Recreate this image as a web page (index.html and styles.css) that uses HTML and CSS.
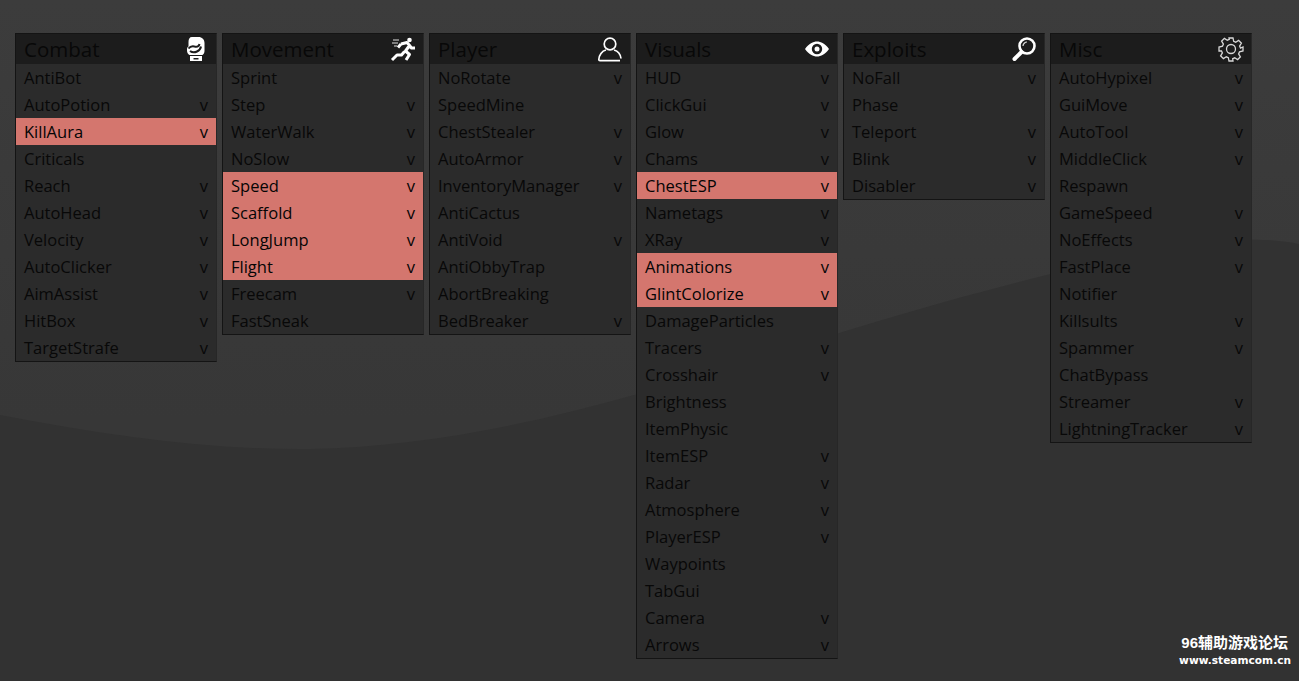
FILE: index.html
```html
<!DOCTYPE html>
<html lang="en">
<head>
<meta charset="utf-8">
<title>ClickGui</title>
<link rel="stylesheet" href="styles.css">
</head>
<body>
<svg class="wave" viewBox="0 0 1299 681" preserveAspectRatio="none" aria-hidden="true">
<path class="wave-fill" d="M0 415 C110 436 210 450 310 449 C480 446 640 395 800 345 C950 298 1130 248 1240 240 C1265 239 1285 241 1299 244 L1299 681 L0 681 Z"/>
</svg>
<main class="panels">
<section class="panel">
<header class="head"><span>Combat</span>
<svg class="icon" viewBox="0 0 24 24"><path class="solid" d="M8 0h6.500c3.500 0 6 2.500 6 6v8c0 2-1 3-2 4h-13C4 17 3 15.500 3 13.500V12c0-1 .5-2 1.500-2.500V5C4.500 2 5.500 0 8 0z"/><path class="cut" d="M4.500 11.500c2-2.500 4-2.500 6-2 2.500.5 4.500 0 5-2.500M6 14c2 1.500 5 1.500 7 .5 2-1 3.500-2 4-5"/><path class="solid" fill-rule="evenodd" d="M6 19h12v5H6zM9.500 21v1.500h5V21z"/></svg></header>
<div class="row"><span>AntiBot</span></div>
<div class="row"><span>AutoPotion</span><i>v</i></div>
<div class="row on"><span>KillAura</span><i>v</i></div>
<div class="row"><span>Criticals</span></div>
<div class="row"><span>Reach</span><i>v</i></div>
<div class="row"><span>AutoHead</span><i>v</i></div>
<div class="row"><span>Velocity</span><i>v</i></div>
<div class="row"><span>AutoClicker</span><i>v</i></div>
<div class="row"><span>AimAssist</span><i>v</i></div>
<div class="row"><span>HitBox</span><i>v</i></div>
<div class="row"><span>TargetStrafe</span><i>v</i></div>
</section>
<section class="panel">
<header class="head"><span>Movement</span>
<svg class="icon" viewBox="0 0 24 24"><circle class="solid" cx="18.500" cy="3" r="2.300"/><path class="line" d="M10 7l6-1.500 2.500 3-4 5.500 4 3.500-3.500 5.500M13.500 14.500l-3 3.500H6L1 23M10 7L7 10.500M18.500 8.500l2 2.500h3.500"/><path class="thin" d="M2 3h6M1 6h6M3 9h3"/></svg></header>
<div class="row"><span>Sprint</span></div>
<div class="row"><span>Step</span><i>v</i></div>
<div class="row"><span>WaterWalk</span><i>v</i></div>
<div class="row"><span>NoSlow</span><i>v</i></div>
<div class="row on"><span>Speed</span><i>v</i></div>
<div class="row on"><span>Scaffold</span><i>v</i></div>
<div class="row on"><span>LongJump</span><i>v</i></div>
<div class="row on"><span>Flight</span><i>v</i></div>
<div class="row"><span>Freecam</span><i>v</i></div>
<div class="row"><span>FastSneak</span></div>
</section>
<section class="panel">
<header class="head"><span>Player</span>
<svg class="icon" viewBox="0 0 24 24"><circle class="outline" cx="12" cy="7" r="5.800"/><path class="outline" d="M8 13C4 14 1 18 .8 22.500c0 .8.5 1.200 1.200 1.200h20M16 13c3.500 1 6.500 4.500 7 8.500"/></svg></header>
<div class="row"><span>NoRotate</span><i>v</i></div>
<div class="row"><span>SpeedMine</span></div>
<div class="row"><span>ChestStealer</span><i>v</i></div>
<div class="row"><span>AutoArmor</span><i>v</i></div>
<div class="row"><span>InventoryManager</span><i>v</i></div>
<div class="row"><span>AntiCactus</span></div>
<div class="row"><span>AntiVoid</span><i>v</i></div>
<div class="row"><span>AntiObbyTrap</span></div>
<div class="row"><span>AbortBreaking</span></div>
<div class="row"><span>BedBreaker</span><i>v</i></div>
</section>
<section class="panel">
<header class="head"><span>Visuals</span>
<svg class="icon" viewBox="0 0 24 24"><path class="solid" fill-rule="evenodd" d="M0 12C4 6.500 8 4.500 12 4.500S20 6.500 24 12c-4 5.500-8 7.500-12 7.500S4 17.500 0 12zM12 6.800a5.200 5.200 0 1 0 0 10.400 5.200 5.200 0 0 0 0-10.400z"/><circle class="solid" cx="12" cy="12" r="2.500"/></svg></header>
<div class="row"><span>HUD</span><i>v</i></div>
<div class="row"><span>ClickGui</span><i>v</i></div>
<div class="row"><span>Glow</span><i>v</i></div>
<div class="row"><span>Chams</span><i>v</i></div>
<div class="row on"><span>ChestESP</span><i>v</i></div>
<div class="row"><span>Nametags</span><i>v</i></div>
<div class="row"><span>XRay</span><i>v</i></div>
<div class="row on"><span>Animations</span><i>v</i></div>
<div class="row on"><span>GlintColorize</span><i>v</i></div>
<div class="row"><span>DamageParticles</span></div>
<div class="row"><span>Tracers</span><i>v</i></div>
<div class="row"><span>Crosshair</span><i>v</i></div>
<div class="row"><span>Brightness</span></div>
<div class="row"><span>ItemPhysic</span></div>
<div class="row"><span>ItemESP</span><i>v</i></div>
<div class="row"><span>Radar</span><i>v</i></div>
<div class="row"><span>Atmosphere</span><i>v</i></div>
<div class="row"><span>PlayerESP</span><i>v</i></div>
<div class="row"><span>Waypoints</span></div>
<div class="row"><span>TabGui</span></div>
<div class="row"><span>Camera</span><i>v</i></div>
<div class="row"><span>Arrows</span><i>v</i></div>
</section>
<section class="panel">
<header class="head"><span>Exploits</span>
<svg class="icon" viewBox="0 0 24 24"><circle class="outline thick" cx="15" cy="9" r="7.500"/><path class="handle" d="M9.500 15L2.500 22"/><path class="thin" d="M11 9c0-2 2-4 4-4"/></svg></header>
<div class="row"><span>NoFall</span><i>v</i></div>
<div class="row"><span>Phase</span></div>
<div class="row"><span>Teleport</span><i>v</i></div>
<div class="row"><span>Blink</span><i>v</i></div>
<div class="row"><span>Disabler</span><i>v</i></div>
</section>
<section class="panel">
<header class="head"><span>Misc</span>
<svg class="icon" viewBox="0 0 24 24"><path class="gear" d="M10 1h4l.7 3.300 2 .9 2.900-1.800 2.800 2.800-1.800 2.900.9 2L24 10v4l-3.500.9-.9 2 1.800 2.900-2.800 2.800-2.900-1.800-2 .9L14 24h-4l-.7-3.300-2-.9-2.900 1.800-2.800-2.800 1.800-2.900-.9-2L0 14v-4l3.500-.9.900-2L2.600 4.200l2.800-2.800 2.900 1.800 2-.9z"/><circle class="gear" cx="12" cy="12" r="4.500"/></svg></header>
<div class="row"><span>AutoHypixel</span><i>v</i></div>
<div class="row"><span>GuiMove</span><i>v</i></div>
<div class="row"><span>AutoTool</span><i>v</i></div>
<div class="row"><span>MiddleClick</span><i>v</i></div>
<div class="row"><span>Respawn</span></div>
<div class="row"><span>GameSpeed</span><i>v</i></div>
<div class="row"><span>NoEffects</span><i>v</i></div>
<div class="row"><span>FastPlace</span><i>v</i></div>
<div class="row"><span>Notifier</span></div>
<div class="row"><span>Killsults</span><i>v</i></div>
<div class="row"><span>Spammer</span><i>v</i></div>
<div class="row"><span>ChatBypass</span></div>
<div class="row"><span>Streamer</span><i>v</i></div>
<div class="row"><span>LightningTracker</span><i>v</i></div>
</section>
</main>
<div class="mark"><b class="mark-cn">96辅助游戏论坛</b><b class="mark-url">www.steamcom.cn</b></div>
</body>
</html>
```
FILE: styles.css
```css
* { box-sizing: border-box; }
html, body { margin: 0; height: 100%; }
body {
  position: relative;
  height: 681px;
  overflow: hidden;
  background: linear-gradient(#3c3c3c, #373737 420px);
  font-family: "Open Sans", "Noto Sans", sans-serif;
  color: #080808;
}
.wave { position: absolute; inset: 0; width: 100%; height: 100%; }
.wave-fill { fill: #323232; }
.panels {
  position: relative;
  display: flex;
  align-items: flex-start;
  gap: 5px;
  padding: 33px 0 0 15px;
}
.panel {
  width: 202px;
  background: #2b2b2b;
  border: 1px solid #141414;
  border-right-color: #272727;
}
.head {
  height: 30px;
  display: flex;
  align-items: center;
  justify-content: space-between;
  padding: 0 8px 0 8px;
  background: #1c1c1c;
  font-size: 20.500px;
  line-height: 30px;
}
.icon { width: 24px; height: 24px; flex: none; overflow: visible; }
.solid { fill: #fff; }
.cut { fill: none; stroke: #1c1c1c; stroke-width: 2; }
.line { fill: none; stroke: #fff; stroke-width: 3; stroke-linejoin: round; }
.thin { fill: none; stroke: #e0e0e0; stroke-width: 1.200; }
.outline { fill: none; stroke: #fff; stroke-width: 1.700; }
.thick { stroke-width: 2.600; }
.handle { fill: none; stroke: #fff; stroke-width: 4; stroke-linecap: round; }
.gear { fill: none; stroke: #d8d8d8; stroke-width: 1.300; }
.row {
  height: 27px;
  display: flex;
  align-items: center;
  justify-content: space-between;
  padding: 0 8px;
  font-size: 16.500px;
  line-height: 27px;
}
.row i { font-style: normal; }
.on { background: #d4766e; color: #050505; }
.mark {
  position: absolute;
  right: 8px;
  bottom: 15px;
  display: flex;
  flex-direction: column;
  align-items: flex-end;
  color: #fff;
  line-height: 1;
}
.mark-cn { font-size: 15px; margin-right: 3px; margin-bottom: 5px; font-family: "Liberation Sans", "Noto Sans CJK SC", sans-serif; }
.mark-url { font-size: 10.600px; font-family: "DejaVu Sans", sans-serif; }
```
